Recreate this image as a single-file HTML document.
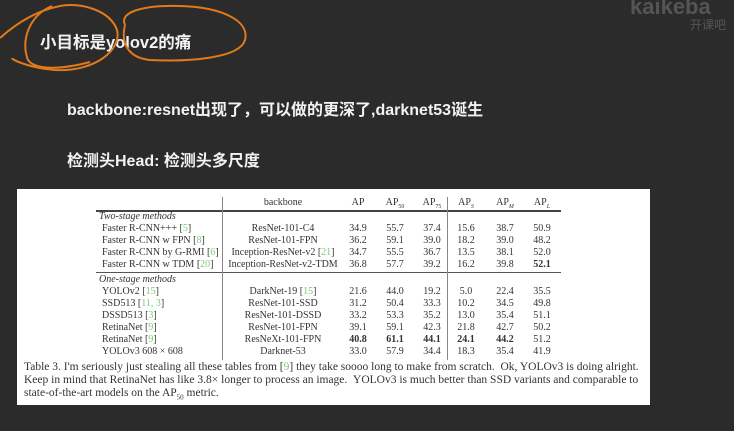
<!DOCTYPE html>
<html><head><meta charset="utf-8"><style>
body{margin:0;width:734px;height:431px;background:#2b2b2b;overflow:hidden;position:relative;font-family:"Liberation Sans","Noto Sans CJK SC",sans-serif;}
.t{position:absolute;color:#f2f2f2;font-weight:bold;white-space:nowrap}
.box{position:absolute;left:17px;top:189px;width:633px;height:216px;background:#fff;}
.s{position:absolute;font-family:"Liberation Serif",serif;font-size:10px;color:#333;white-space:nowrap;line-height:12px}
.c{transform:translateX(-50%)}
.hl{position:absolute;height:1px;background:#555}
.vl{position:absolute;width:1px;background:#888}
.g{color:#7c7}
</style></head><body>
<div class="t" style="left:40px;top:29px;font-size:16.5px">小目标是yolov2的痛</div>
<div class="t" style="left:67px;top:96px;font-size:16px">backbone:resnet出现了，可以做的更深了,darknet53诞生</div>
<div class="t" style="left:67px;top:147px;font-size:16px">检测头Head: 检测头多尺度</div>
<div style="position:absolute;left:630px;top:-6px;color:#555;font-size:22px;font-weight:bold">kaikeba</div>
<div style="position:absolute;left:690px;top:16px;color:#555;font-size:12px">开课吧</div>
<svg style="position:absolute;left:0;top:0" width="260" height="80">
<g fill="none" stroke="#e07a1a" stroke-width="2">
<path d="M0 38 C20 20 40 10 60 6 C80 2 110 10 117 30 C122 50 95 72 55 70 C30 68 12 60 12 58"/>
<path d="M52 6 C30 15 20 40 28 60 C35 70 60 70 90 62"/>
<path d="M125 25 C118 10 150 5 180 6 C220 7 250 20 245 40 C240 58 190 62 150 60 C130 58 120 45 125 25"/>
</g></svg>
<div class="box">
<div class="hl" style="left:79px;top:21px;width:465px;height:1.5px;background:#444"></div>
<div class="hl" style="left:79px;top:83px;width:465px"></div>
<div class="vl" style="left:205px;top:8px;height:163px"></div>
<div class="vl" style="left:430px;top:8px;height:163px"></div>
<div class="s c" style="left:266px;top:8px">backbone</div>
<div class="s c" style="left:341px;top:8px">AP</div>
<div class="s c" style="left:378px;top:8px">AP<sub style="font-size:6px">50</sub></div>
<div class="s c" style="left:415px;top:8px">AP<sub style="font-size:6px">75</sub></div>
<div class="s c" style="left:449px;top:8px">AP<sub style="font-size:6px"><i>S</i></sub></div>
<div class="s c" style="left:488px;top:8px">AP<sub style="font-size:6px"><i>M</i></sub></div>
<div class="s c" style="left:525px;top:8px">AP<sub style="font-size:6px"><i>L</i></sub></div>
<div class="s" style="left:82px;top:22px;font-style:italic">Two-stage methods</div>
<div class="s" style="left:82px;top:85px;font-style:italic">One-stage methods</div>
<div id="rows"></div>
<div class="s" style="left:7px;top:172px;font-size:11.5px;line-height:13px">Table 3. I'm seriously just stealing all these tables from [<span class="g">9</span>] they take soooo long to make from scratch. &nbsp;Ok, YOLOv3 is doing alright.<br>Keep in mind that RetinaNet has like 3.8× longer to process an image. &nbsp;YOLOv3 is much better than SSD variants and comparable to<br>state-of-the-art models on the AP<sub style="font-size:7px">50</sub> metric.</div>
</div>
<script>
var R=[[34,"Faster R-CNN+++ [<span class=g>5</span>]","ResNet-101-C4","34.9","55.7","37.4","15.6","38.7","50.9"],
[46,"Faster R-CNN w FPN [<span class=g>8</span>]","ResNet-101-FPN","36.2","59.1","39.0","18.2","39.0","48.2"],
[58,"Faster R-CNN by G-RMI [<span class=g>6</span>]","Inception-ResNet-v2 [<span class=g>21</span>]","34.7","55.5","36.7","13.5","38.1","52.0"],
[70,"Faster R-CNN w TDM [<span class=g>20</span>]","Inception-ResNet-v2-TDM","36.8","57.7","39.2","16.2","39.8","<b>52.1</b>"],
[97,"YOLOv2 [<span class=g>15</span>]","DarkNet-19 [<span class=g>15</span>]","21.6","44.0","19.2","5.0","22.4","35.5"],
[109,"SSD513 [<span class=g>11, 3</span>]","ResNet-101-SSD","31.2","50.4","33.3","10.2","34.5","49.8"],
[121,"DSSD513 [<span class=g>3</span>]","ResNet-101-DSSD","33.2","53.3","35.2","13.0","35.4","51.1"],
[133,"RetinaNet [<span class=g>9</span>]","ResNet-101-FPN","39.1","59.1","42.3","21.8","42.7","50.2"],
[145,"RetinaNet [<span class=g>9</span>]","ResNeXt-101-FPN","<b>40.8</b>","<b>61.1</b>","<b>44.1</b>","<b>24.1</b>","<b>44.2</b>","51.2"],
[157,"YOLOv3 608 × 608","Darknet-53","33.0","57.9","34.4","18.3","35.4","41.9"]];
var X=[266,341,378,415,449,488,525],h="";
R.forEach(function(r){h+='<div class="s" style="left:85px;top:'+r[0]+'px">'+r[1]+'</div>';
for(var i=0;i<7;i++)h+='<div class="s c" style="left:'+X[i]+'px;top:'+r[0]+'px">'+r[i+2]+'</div>';});
document.getElementById("rows").outerHTML=h;
</script>
</body></html>
